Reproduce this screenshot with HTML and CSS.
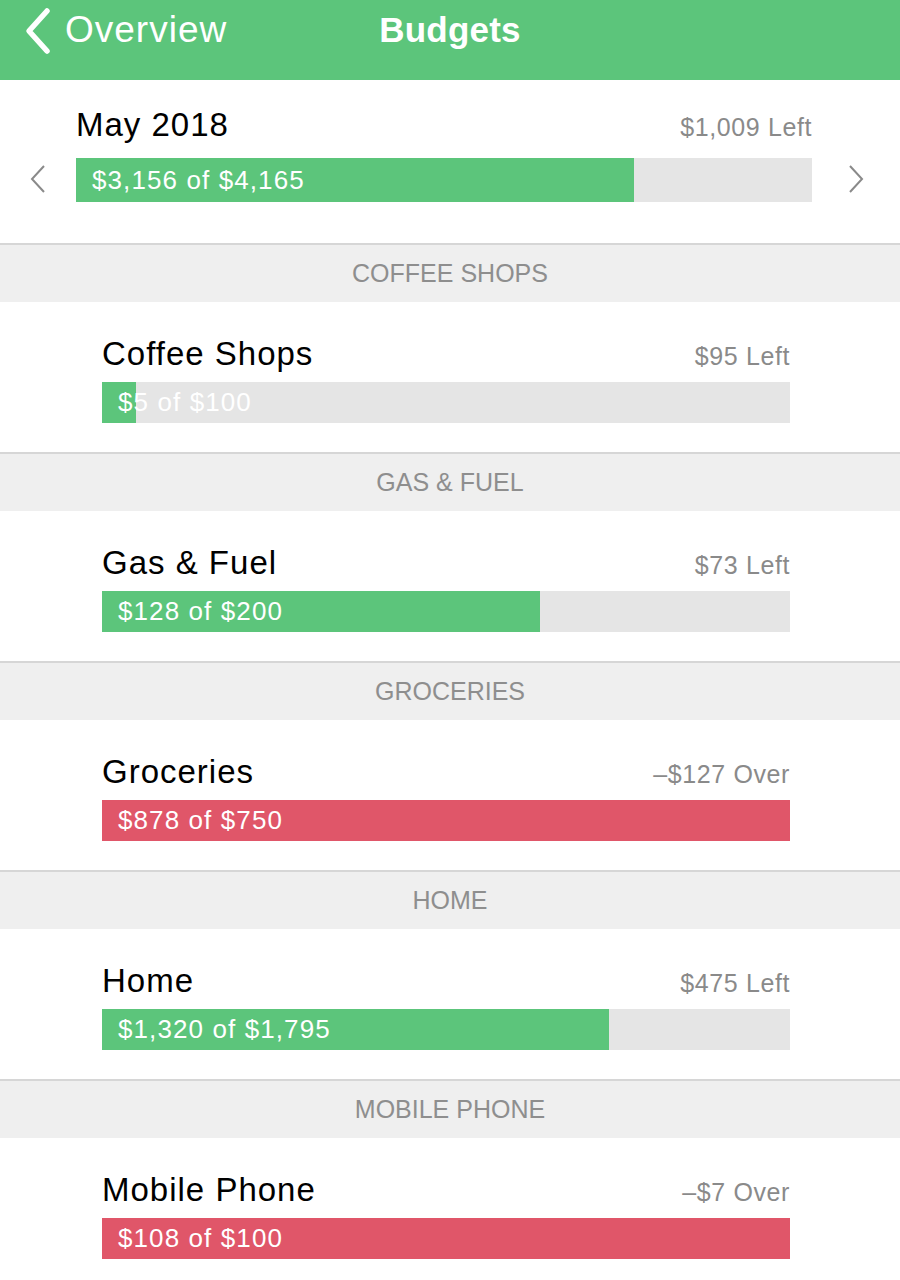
FILE: index.html
```html
<!DOCTYPE html>
<html>
<head>
<meta charset="utf-8">
<title>Budgets</title>
<link rel="stylesheet" href="styles.css">
</head>
<body>
<header class="navbar">
  <a class="back">
    <svg class="back-icon" width="30" height="48" viewBox="0 0 30 48"><path d="M24 4 L6 24 L24 44" fill="none" stroke="#fff" stroke-width="5.5" stroke-linecap="round" stroke-linejoin="round"/></svg>
    <span>Overview</span>
  </a>
  <h1 class="title">Budgets</h1>
  <span></span>
</header>

<section class="month">
  <svg class="nav-chev" width="18" height="30" viewBox="0 0 18 30"><path d="M15 2 L3 15 L15 28" fill="none" stroke="#8a8a8a" stroke-width="2"/></svg>
  <div class="month-body">
    <div class="line">
      <span class="name">May 2018</span>
      <span class="remain">$1,009 Left</span>
    </div>
    <div class="bar bar-big">
      <div class="fill green" style="width:75.8%"></div>
      <span class="label">$3,156 of $4,165</span>
    </div>
  </div>
  <svg class="nav-chev" width="18" height="30" viewBox="0 0 18 30"><path d="M3 2 L15 15 L3 28" fill="none" stroke="#8a8a8a" stroke-width="2"/></svg>
</section>

<div class="section-head">COFFEE SHOPS</div>
<div class="row">
  <div class="line">
    <span class="name">Coffee Shops</span>
    <span class="remain">$95 Left</span>
  </div>
  <div class="bar">
    <div class="fill green" style="width:5%"></div>
    <span class="label">$5 of $100</span>
  </div>
</div>

<div class="section-head">GAS &amp; FUEL</div>
<div class="row">
  <div class="line">
    <span class="name">Gas &amp; Fuel</span>
    <span class="remain">$73 Left</span>
  </div>
  <div class="bar">
    <div class="fill green" style="width:63.7%"></div>
    <span class="label">$128 of $200</span>
  </div>
</div>

<div class="section-head">GROCERIES</div>
<div class="row">
  <div class="line">
    <span class="name">Groceries</span>
    <span class="remain">&ndash;$127 Over</span>
  </div>
  <div class="bar">
    <div class="fill red" style="width:100%"></div>
    <span class="label">$878 of $750</span>
  </div>
</div>

<div class="section-head">HOME</div>
<div class="row">
  <div class="line">
    <span class="name">Home</span>
    <span class="remain">$475 Left</span>
  </div>
  <div class="bar">
    <div class="fill green" style="width:73.7%"></div>
    <span class="label">$1,320 of $1,795</span>
  </div>
</div>

<div class="section-head">MOBILE PHONE</div>
<div class="row">
  <div class="line">
    <span class="name">Mobile Phone</span>
    <span class="remain">&ndash;$7 Over</span>
  </div>
  <div class="bar">
    <div class="fill red" style="width:100%"></div>
    <span class="label">$108 of $100</span>
  </div>
</div>
</body>
</html>
```

FILE: styles.css
```css
* { box-sizing: border-box; }
html, body { margin: 0; padding: 0; }
body {
  width: 900px;
  background: #fff;
  font-family: "Liberation Sans", Arial, sans-serif;
  color: #000;
  overflow: hidden;
}

.navbar {
  height: 80px;
  background: #5cc57b;
  display: grid;
  grid-template-columns: 1fr auto 1fr;
  align-items: center;
  padding-bottom: 20px;
  color: #fff;
}
.back {
  display: flex;
  align-items: center;
  padding-left: 23px;
  font-size: 37px;
  letter-spacing: 1px;
}
.back-icon { margin-right: 12px; margin-top: 1px; }
.title {
  margin: 0;
  font-size: 35px;
  font-weight: bold;
  letter-spacing: 0.2px;
}

.month {
  display: grid;
  grid-template-columns: 76px 736px 88px;
  align-items: end;
  padding: 25px 0 41px;
}
.nav-chev { justify-self: center; margin-bottom: 8px; }
.month-body .line { margin-bottom: 11px; }

.line {
  display: flex;
  justify-content: space-between;
  align-items: baseline;
  line-height: 40px;
}
.name {
  font-size: 33px;
  letter-spacing: 1px;
}
.remain {
  font-size: 25px;
  color: #8a8a8a;
  letter-spacing: 0.6px;
}

.bar {
  display: grid;
  height: 41px;
  background: #e5e5e5;
}
.bar-big { height: 44px; }
.bar > * { grid-area: 1 / 1; }
.fill { height: 100%; }
.green { background: #5cc57b; }
.red { background: #e05669; }
.label {
  align-self: center;
  padding-left: 16px;
  color: #fff;
  font-size: 26px;
  letter-spacing: 1.1px;
}

.section-head {
  height: 59px;
  border-top: 2px solid #d6d6d6;
  background: #efefef;
  color: #8e8e8e;
  font-size: 25px;
  text-align: center;
  line-height: 57px;
}

.row {
  height: 150px;
  padding: 32px 110px 0 102px;
}
.row .line { margin-bottom: 6px; }
```
